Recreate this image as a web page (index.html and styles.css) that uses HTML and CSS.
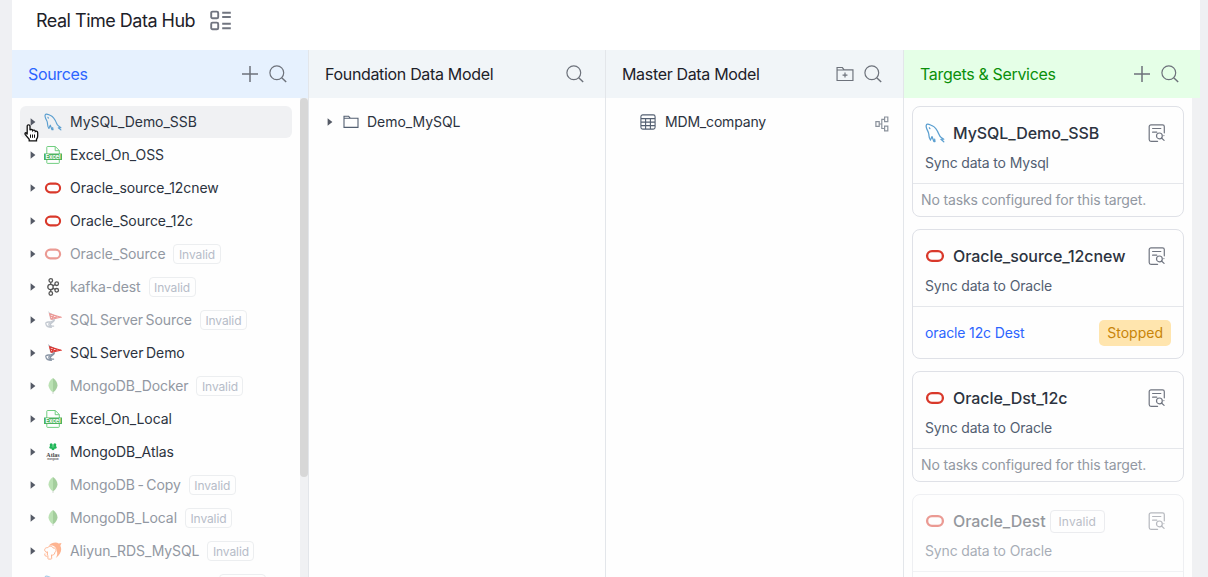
FILE: index.html
```
<!DOCTYPE html>
<html lang="en">
<head>
<meta charset="utf-8">
<title>Real Time Data Hub</title>
<link rel="stylesheet" href="styles.css">
</head>
<body>
<svg class="sprite" aria-hidden="true">
  <symbol id="plus" viewBox="0 0 18 18"><path d="M9 1v16M1 9h16" fill="none" stroke="currentColor" stroke-width="1.5"/></symbol>
  <symbol id="search" viewBox="0 0 18 18"><circle cx="7.8" cy="7.8" r="6.9" fill="none" stroke="currentColor" stroke-width="1.2"/><path d="M12.7 12.7l4.5 4.3" fill="none" stroke="currentColor" stroke-width="1.4"/></symbol>
  <symbol id="layout" viewBox="0 0 22 22"><g fill="none" stroke="currentColor" stroke-width="1.9"><rect x="1.2" y="1.6" width="7" height="6.6" rx="1.3"/><rect x="1.2" y="12.6" width="7" height="6.6" rx="1.3"/><path d="M12.2 2.7h8.6M12.2 7h8.6M12.2 13.8h8.6M12.2 18.2h8.6"/></g></symbol>
  <symbol id="caret" viewBox="0 0 6 8"><path d="M.6.3L5.400 4 .6 7.700z" fill="currentColor"/></symbol>
  <symbol id="folder" viewBox="0 0 16 14"><path d="M1 12.4V1.2h4.6l1.6 2H15v9.2zM1 3.3h6.2" fill="none" stroke="currentColor" stroke-width="1.1"/></symbol>
  <symbol id="folder-add" viewBox="0 0 17 15"><path d="M1 13.6V1.4h5l1.7 2.2H16v10zM1 3.7h6.6M8.5 6.2v4.6M6.2 8.5h4.6" fill="none" stroke="currentColor" stroke-width="1.1"/></symbol>
  <symbol id="table" viewBox="0 0 16 16"><path d="M2.7.9h10.6a1.8 1.8 0 0 1 1.8 1.8v10.6a1.8 1.8 0 0 1-1.8 1.8H2.7a1.8 1.8 0 0 1-1.8-1.8V2.7A1.8 1.8 0 0 1 2.7.9zM1 4.6h14M1 8.1h14M1 11.6h14M5.6 4.6V15M10.4 4.6V15" fill="none" stroke="currentColor" stroke-width="1.1"/></symbol>
  <symbol id="lineage" viewBox="0 0 14 16"><path d="M.9 5.7h3.3v4.6H.9zM9.6 1h3.2v4.6H9.6zM9.6 10.2h3.2v4.6H9.6zM4.2 8h2.5M9.6 3.3H6.8v9.2h2.8" fill="none" stroke="currentColor" stroke-width="1.2"/></symbol>
  <symbol id="detail" viewBox="0 0 18 18"><g fill="none" stroke="currentColor" stroke-width="1.2" stroke-linecap="round"><path d="M9.6 17.3H3A1.8 1.8 0 0 1 1.2 15.500V2.600A1.800 1.800 0 0 1 3 .8h11.500a1.800 1.800 0 0 1 1.800 1.800v6.200M4.600 4.500h8.200M4.600 8.200h4.200"/><circle cx="11.400" cy="11.900" r="2.900"/><path d="M13.500 14l2.600 2.400M15.900 11.500v.1"/></g></symbol>
  <symbol id="mysql" viewBox="0 0 18 18"><g fill="none" stroke="#5b9fd0" stroke-width="1.150" stroke-linejoin="round" stroke-linecap="round"><path d="M4.900 15.200C3.400 13.800 3.700 11.600 3.400 9.800 3.200 7.900 1.700 6.200 1.300 4.300.9 3.200.8 1.300 2.200 1.100c1.600-.2 2.900 1 4.400 1.400 3.300 1.500 4.600 4.500 5.800 7.400.5 1.300.9 2.400 2.200 3.100l2.300 1.600-2.600.1 2.600 2.200"/><path d="M4.900 15.200l1.400-3 1.700 4.500h1l-.3-2.100M3.900 4.300l.5.800"/></g></symbol>
  <symbol id="oracle" viewBox="0 0 18 18"><rect x="1.900" y="4.600" width="14.200" height="8.800" rx="4.400" fill="none" stroke="#d9392b" stroke-width="2.100"/></symbol>
  <symbol id="excel" viewBox="0 0 18 18"><path d="M2.800 8V1.200q0-.7.700-.7h7.800l4 4V8M11.200.7v4h4M2.800 14v2.700q0 .7.700.7h11q.8 0 .8-.7V14" fill="none" stroke="#62c873" stroke-width=".9"/><path d="M0 7.500h18v6.500H0z" fill="#4eb45f"/><text x="9" y="12.900" class="excel-word">Excel</text></symbol>
  <symbol id="kafka" viewBox="0 0 18 18"><g fill="none" stroke="#555" stroke-width="1.300"><circle cx="6.800" cy="2.500" r="1.800"/><circle cx="6.500" cy="9" r="2.700"/><circle cx="6.800" cy="15.500" r="1.800"/><circle cx="12.700" cy="5.700" r="1.800"/><circle cx="12.700" cy="12.300" r="1.800"/><path d="M6.700 4.300v2M6.700 11.700v2M8.900 7.800l2.200-1.200M8.900 10.200l2.200 1.200"/></g></symbol>
  <symbol id="sqlserver" viewBox="0 0 18 18"><g fill="none" stroke-linecap="round"><path d="M4.800 1l1.300 2.300.3 3.900M5.900 2.200l3.500 1.600M6.300 7.200l2.900 1.400" stroke="#8f98a5" stroke-width=".9"/><path d="M5.600 2.900l11.300 3.300-9.700 2.200zM6 4.800l6.100 2.300M9.600 4.200L8 8.200M12.500 5.200l-2 2.700" stroke="#dc3732" stroke-width="1.200"/><path d="M9.800 8.800C9.400 10.500 7 10.700 4.400 11c-1.800.2-2.900.8-2.600 1.600M10.500 8.900c-.8 3-4 2.600-4.100 4.500-.1 1.300 1.400 2 3.200 1.700M2 13.500c.6 1.600 2.700 2.800 5.300 2.900M6.200 11.400c-2 1.400-1.800 3 .4 4.700" stroke="#8995a5" stroke-width="1.300"/></g></symbol>
  <symbol id="mongo" viewBox="0 0 18 18"><path d="M9 1C4.200 4.600 2 10 9 15.500z" fill="#78c66a"/><path d="M9 1c4.800 3.600 7 9 0 14.500z" fill="#4d9f3f"/><path d="M9 14.500v2.500" stroke="#a2b5a0" stroke-width=".9"/></symbol>
  <symbol id="atlas" viewBox="0 0 18 18"><g fill="#1fb558"><circle cx="7.200" cy="1.700" r="1.500"/><circle cx="10.800" cy="1.700" r="1.500"/><circle cx="6.900" cy="4.300" r="1.500"/><circle cx="11.100" cy="4.300" r="1.500"/><circle cx="9" cy="5.600" r="1.600"/></g><circle cx="9" cy="3.200" r="1.200" fill="#4bcb76"/><text x="9" y="13.500" class="atlas-word">Atlas</text><text x="9" y="16.800" class="atlas-sub">mongoDB</text></symbol>
  <symbol id="aliyun" viewBox="0 0 18 18"><path d="M4.700 3.800C7.500.4 12.500-.3 14.600 1.500l2.900-.4-1.200 2.700c2.100 4 .4 8.500-4.500 12.300.6-1.800 1.500-2.300 1.400-4.800 0-3.600-1.500-6-3.500-7.200-1.600-.7-3.400-.6-5-.3z" fill="#ff6d27"/><path d="M3.300 10.500C-.8 9.600.3 5.200 3.600 5.700 5.200 3.500 8.300 4 9 6c2.900-.5 4.200 2.800 1.800 4.600-.2 2.100-1.900 3-3.300 2.300l.2 3.500q0 .7-.8.700H4.600q-.7 0-.7-.7v-3M3.400 9.500v3.600M1 11.500c-1 2 .9 3.500 2.400 2.400" fill="#fff" stroke="#ff6d27" stroke-width="1"/></symbol>
</svg>

<main class="hub">
  <header class="topbar">
    <h1 class="title">Real Time Data Hub</h1>
    <svg class="layout-icon"><use href="#layout"/></svg>
  </header>

  <div class="columns">
    <section class="column">
      <div class="head head-blue"><h2>Sources</h2><svg class="tool"><use href="#plus"/></svg><svg class="tool"><use href="#search"/></svg></div>
      <div class="body">
        <ul class="tree">
          <li class="row selected"><svg class="caret"><use href="#caret"/></svg><svg class="logo"><use href="#mysql"/></svg><span class="name">MySQL_Demo_SSB</span></li>
          <li class="row"><svg class="caret"><use href="#caret"/></svg><svg class="logo"><use href="#excel"/></svg><span class="name">Excel_On_OSS</span></li>
          <li class="row"><svg class="caret"><use href="#caret"/></svg><svg class="logo"><use href="#oracle"/></svg><span class="name">Oracle_source_12cnew</span></li>
          <li class="row"><svg class="caret"><use href="#caret"/></svg><svg class="logo"><use href="#oracle"/></svg><span class="name">Oracle_Source_12c</span></li>
          <li class="row invalid"><svg class="caret"><use href="#caret"/></svg><svg class="logo"><use href="#oracle"/></svg><span class="name">Oracle_Source</span><span class="tag">Invalid</span></li>
          <li class="row invalid"><svg class="caret"><use href="#caret"/></svg><svg class="logo solid"><use href="#kafka"/></svg><span class="name">kafka-dest</span><span class="tag">Invalid</span></li>
          <li class="row invalid"><svg class="caret"><use href="#caret"/></svg><svg class="logo"><use href="#sqlserver"/></svg><span class="name">SQL Server Source</span><span class="tag">Invalid</span></li>
          <li class="row"><svg class="caret"><use href="#caret"/></svg><svg class="logo"><use href="#sqlserver"/></svg><span class="name">SQL Server Demo</span></li>
          <li class="row invalid"><svg class="caret"><use href="#caret"/></svg><svg class="logo"><use href="#mongo"/></svg><span class="name">MongoDB_Docker</span><span class="tag">Invalid</span></li>
          <li class="row"><svg class="caret"><use href="#caret"/></svg><svg class="logo"><use href="#excel"/></svg><span class="name">Excel_On_Local</span></li>
          <li class="row"><svg class="caret"><use href="#caret"/></svg><svg class="logo"><use href="#atlas"/></svg><span class="name">MongoDB_Atlas</span></li>
          <li class="row invalid"><svg class="caret"><use href="#caret"/></svg><svg class="logo"><use href="#mongo"/></svg><span class="name">MongoDB - Copy</span><span class="tag">Invalid</span></li>
          <li class="row invalid"><svg class="caret"><use href="#caret"/></svg><svg class="logo"><use href="#mongo"/></svg><span class="name">MongoDB_Local</span><span class="tag">Invalid</span></li>
          <li class="row invalid"><svg class="caret"><use href="#caret"/></svg><svg class="logo"><use href="#aliyun"/></svg><span class="name">Aliyun_RDS_MySQL</span><span class="tag">Invalid</span></li>
          <li class="row invalid clipped"><svg class="caret"><use href="#caret"/></svg><svg class="logo"><use href="#mysql"/></svg><span class="name"></span><span class="tag"></span></li>
        </ul>
        <div class="track"><div class="thumb"></div></div>
      </div>
    </section>

    <section class="column">
      <div class="head"><h2>Foundation Data Model</h2><svg class="tool"><use href="#search"/></svg></div>
      <ul class="tree">
        <li class="row"><svg class="caret"><use href="#caret"/></svg><svg class="folder"><use href="#folder"/></svg><span class="name">Demo_MySQL</span></li>
      </ul>
    </section>

    <section class="column">
      <div class="head"><h2>Master Data Model</h2><svg class="tool"><use href="#folder-add"/></svg><svg class="tool"><use href="#search"/></svg></div>
      <ul class="tree">
        <li class="row leaf"><svg class="table"><use href="#table"/></svg><span class="name">MDM_company</span><svg class="lineage"><use href="#lineage"/></svg></li>
      </ul>
    </section>

    <section class="column">
      <div class="head head-green"><h2>Targets &amp; Services</h2><svg class="tool"><use href="#plus"/></svg><svg class="tool"><use href="#search"/></svg></div>
      <div class="body">
        <div class="cards">
          <article class="card">
            <div class="card-main"><div class="card-top"><svg class="card-logo"><use href="#mysql"/></svg><h3>MySQL_Demo_SSB</h3><svg class="detail"><use href="#detail"/></svg></div><p class="sync">Sync data to Mysql</p></div>
            <p class="empty">No tasks configured for this target.</p>
          </article>
          <article class="card">
            <div class="card-main"><div class="card-top"><svg class="card-logo"><use href="#oracle"/></svg><h3>Oracle_source_12cnew</h3><svg class="detail"><use href="#detail"/></svg></div><p class="sync">Sync data to Oracle</p></div>
            <div class="task"><a class="link">oracle 12c Dest</a><span class="status">Stopped</span></div>
          </article>
          <article class="card">
            <div class="card-main"><div class="card-top"><svg class="card-logo"><use href="#oracle"/></svg><h3>Oracle_Dst_12c</h3><svg class="detail"><use href="#detail"/></svg></div><p class="sync">Sync data to Oracle</p></div>
            <p class="empty">No tasks configured for this target.</p>
          </article>
          <article class="card faded">
            <div class="card-main"><div class="card-top"><svg class="card-logo"><use href="#oracle"/></svg><h3>Oracle_Dest</h3><span class="tag">Invalid</span><svg class="detail"><use href="#detail"/></svg></div><p class="sync">Sync data to Oracle</p></div>
          </article>
        </div>
        <div class="track"></div>
      </div>
    </section>
  </div>
</main>

<svg class="pointer" viewBox="0 0 16 18"><path d="M3.200 10.500V2.300q0-1.500 1.400-1.500T6 2.300v4q.4-1 1.500-.8t1.200 1.100q.5-.7 1.500-.4t1.100 1.200q.6-.5 1.500-.1t.9 1.500v3.200q0 2-1.200 3.300v1.500H5.200v-1.500L1.300 10.700Q.6 9.500 1.500 8.900t1.700 1.600z" fill="#fff" stroke="#111" stroke-width="1.300"/><path d="M6.500 10.500v3.300M8.500 10.500v3.300M10.500 10.500v3.300" stroke="#111"/></svg>
</body>
</html>
```
FILE: styles.css
```
* { box-sizing: border-box; }
body { margin: 0; height: 577px; overflow: hidden; background: #eff0f3; font-family: Inter, "Liberation Sans", sans-serif; font-size: 14px; color: #2c3340; }
h1, h2, h3, p, ul { margin: 0; padding: 0; font-weight: 400; }
svg { flex: none; }
.sprite { display: none; }
.excel-word { font: 700 5.800px Inter, sans-serif; fill: #fff; text-anchor: middle; }
.atlas-word { font: 700 6px "Liberation Serif", serif; fill: #444; text-anchor: middle; }
.atlas-sub { font: 700 2.400px Inter, sans-serif; fill: #666; text-anchor: middle; }

.hub { margin: 0 8px 0 12px; height: 577px; background: #fff; display: flex; flex-direction: column; }
.topbar { height: 50px; flex: none; padding: 0 24px 9px; display: flex; align-items: center; gap: 15px; }
.title { font-size: 18px; line-height: 24px; letter-spacing: -.5px; color: #1d2129; }
.layout-icon { width: 22px; height: 22px; color: #717580; }

.columns { flex: 1; min-height: 0; display: grid; grid-template-columns: 297px 297px 298px 296px; }
.column { min-width: 0; min-height: 0; display: flex; flex-direction: column; overflow: hidden; background: #fefefe; border-right: 1px solid #e3e6ea; }
.column:last-child { border-right: 0; }
.head { height: 48px; flex: none; display: flex; align-items: center; gap: 10px; padding: 0 21px 0 16px; background: #f1f5f8; }
.head h2 { flex: 1; font-size: 16px; line-height: 24px; letter-spacing: -.33px; color: #1d2129; white-space: nowrap; }
.head-blue { background: #e6f1fe; }
.head-blue h2 { color: #2c65ff; }
.head-green { background: #e5ffe7; }
.head-green h2 { color: #0a8f0a; }
.tool { width: 18px; height: 18px; color: #6d727b; }

.body { flex: 1; min-height: 0; display: flex; }
.tree { flex: 1; list-style: none; padding: 8px; display: flex; flex-direction: column; gap: 1px; }
.row { height: 32px; flex: none; display: flex; align-items: center; padding-left: 10px; border-radius: 6px; }
.selected { background: #f0f1f3; }
.caret { width: 6px; height: 8px; color: #555a66; }
.logo { width: 18px; height: 18px; margin: 0 8px; }
.name { font-size: 14px; line-height: 20px; letter-spacing: -.05px; word-spacing: -1.300px; white-space: nowrap; }
.invalid .name { color: #9298a2; letter-spacing: -.09px; }
.invalid .logo { opacity: .5; }
.invalid .solid { opacity: 1; }
.tag { height: 20px; margin: 0 0 0 8px; padding: 0 4.500px; border: 1px solid #eceef0; border-radius: 4px; font-size: 12px; line-height: 19px; color: #b6bcc8; letter-spacing: -.1px; }
.clipped .name { width: 141px; }
.clipped .tag { width: 47px; }
.folder { width: 16px; height: 14px; margin: 0 8px 0 10px; color: #535f71; }
.leaf { padding: 0 5px 0 26px; }
.leaf .name { flex: 1; letter-spacing: -.18px; }
.table { width: 16px; height: 16px; margin-right: 9px; color: #535f71; }
.lineage { width: 14px; height: 16px; margin: 4px 1px 0 0; color: #8b929c; }

.track { width: 8px; flex: none; background: #f0f1f3; }
.thumb { height: 379px; border-radius: 4px; background: #d7d7d7; }

.cards { flex: 1; padding: 8px; display: flex; flex-direction: column; gap: 12px; }
.card { flex: none; border: 1px solid #dfe1e7; border-radius: 8px; }
.card-main { height: 77px; padding: 14px 17px 0 12px; border-bottom: 1px solid #e5e7eb; }
.card-top { height: 24px; display: flex; align-items: center; }
.card-logo { width: 20px; height: 20px; margin-right: 8px; }
.card h3 { font-size: 16px; line-height: 24px; font-weight: 500; letter-spacing: -.05px; white-space: nowrap; }
.detail { width: 18px; height: 18px; margin-left: auto; color: #707580; }
.sync { margin-top: 8px; line-height: 20px; letter-spacing: -.16px; color: #535f72; }
.empty { height: 32px; padding-left: 8px; line-height: 32px; letter-spacing: -.15px; color: #9298a2; }
.task { height: 51px; padding: 0 12px; display: flex; align-items: center; justify-content: space-between; }
.link { color: #2c65ff; letter-spacing: -.13px; }
.status { padding: 0 8px; border-radius: 5px; line-height: 26px; background: #ffe5ae; color: #c88408; }
.faded { height: 120px; opacity: .5; }
.faded .tag { height: 23px; padding: 0 8px; line-height: 21px; margin: 0 0 0 4px; border-color: #d9dce2; color: #777f91; letter-spacing: .1px; }

.pointer { position: absolute; left: 23.500px; top: 124px; width: 16px; height: 18px; }
```
